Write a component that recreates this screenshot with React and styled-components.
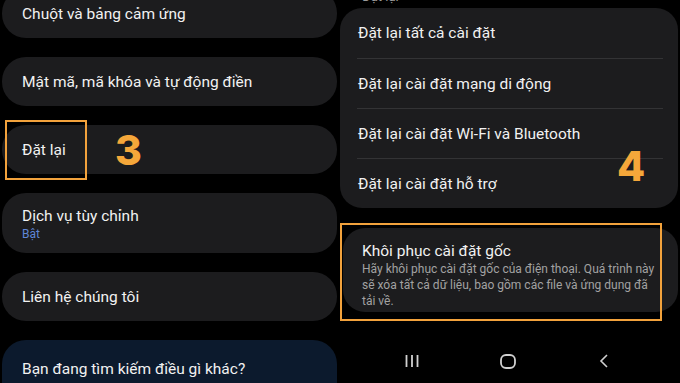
import React from 'react';
import styled, { createGlobalStyle } from 'styled-components'

const Global = createGlobalStyle`
  body {
    margin: 0;
    background: #000;
    font-family: Roboto, "Noto Sans", sans-serif;
    color: #f1f1f1;
  }
`

const Screen = styled.div`
  display: grid;
  grid-template-columns: 338px 340px;
  column-gap: 2px;
  width: 680px;
  height: 383px;
  overflow: hidden;
  background: #000;
`

const LeftColumn = styled.div`
  display: flex;
  flex-direction: column;
  gap: 19px;
  margin-top: -11px;
  padding-left: 2px;
`

const Card = styled.div`
  position: relative;
  box-sizing: border-box;
  width: 335px;
  min-height: 49px;
  padding: ${p => p.$sub ? '13px 20px 11px' : '0 20px'};
  display: flex;
  flex-direction: column;
  justify-content: center;
  border-radius: 24px;
  background: ${p => p.$blue ? '#0c1a2d' : '#1c1c1e'};
  ${p => p.$blue && 'justify-content: flex-start; padding-top: 19px; height: 70px;'}
`

const Title = styled.div`
  font-size: 15.5px;
  line-height: 20px;
  color: #f1f1f1;
  white-space: nowrap;
`

const Sub = styled.div`
  font-size: 12px;
  line-height: 16px;
  color: #5f86d6;
`

const Highlight = styled.div`
  position: absolute;
  border: 2px solid #f2a23c;
  box-sizing: border-box;
  left: ${p => p.$l}px;
  top: ${p => p.$t}px;
  width: ${p => p.$w}px;
  height: ${p => p.$h}px;
  pointer-events: none;
`

const Step = styled.div`
  position: absolute;
  left: ${p => p.$l}px;
  top: ${p => p.$t}px;
  font-family: Inter, sans-serif;
  font-weight: 800;
  font-size: 41px;
  line-height: 1;
  color: #f5a73a;
`

const RightColumn = styled.div`
  display: flex;
  flex-direction: column;
`

const Crumb = styled.div`
  margin-top: -10px;
  height: 18px;
  padding-left: 22px;
  font-size: 13px;
  line-height: 14px;
  color: #9a9a9a;
`

const Group = styled.div`
  position: relative;
  width: 338px;
  border-radius: 22px;
  background: #1c1c1e;
`

const Row = styled.div`
  height: 50px;
  box-sizing: border-box;
  display: flex;
  align-items: center;
  padding-left: 18px;
  font-size: 15.5px;
  color: #f1f1f1;
  & + & {
    border-top: 1px solid #333335;
    margin: 0 15px 0 17px;
    padding-left: 1px;
  }
`

const FactoryWrap = styled.div`
  position: relative;
  margin-top: 20px;
  padding-left: 3px;
`

const FactoryCard = styled.div`
  width: 335px;
  box-sizing: border-box;
  padding: 13px 20px 3px 19px;
  border-radius: 22px;
  background: #1c1c1e;
`

const Desc = styled.div`
  font-size: 12px;
  line-height: 16px;
  color: #a2a2a2;
  white-space: nowrap;
`

const NavBar = styled.div`
  display: grid;
  grid-template-columns: repeat(3, 96px);
  padding-left: 24px;
  margin-top: 25px;
  height: 48px;
  align-items: center;
  justify-items: center;
`

const NavIcon = ({ type }) => {
  if (type === 'recent') {
    return (
      <svg width="16" height="14" viewBox="0 0 16 14">
        <path d="M2.5 1v12M8 1v12M13.5 1v12" stroke="#d0d0d0" strokeWidth="1.8" />
      </svg>
    )
  }
  if (type === 'home') {
    return (
      <svg width="16" height="15" viewBox="0 0 16 15">
        <rect x="1" y="1" width="14" height="13" rx="5" fill="none" stroke="#d0d0d0" strokeWidth="1.8" />
      </svg>
    )
  }
  return (
    <svg width="10" height="14" viewBox="0 0 10 14">
      <path d="M8 1L2 7l6 6" fill="none" stroke="#d0d0d0" strokeWidth="1.6" />
    </svg>
  )
}

const App = () => {
  return (
    <>
      <Global />
      <Screen>
        <LeftColumn>
          <Card><Title>Chuột và bảng cảm ứng</Title></Card>
          <Card><Title>Mật mã, mã khóa và tự động điền</Title></Card>
          <Card>
            <Title>Đặt lại</Title>
            <Highlight $l={3} $t={-5} $w={82} $h={60} />
            <Step $l={113} $t={5}>3</Step>
          </Card>
          <Card $sub>
            <Title>Dịch vụ tùy chỉnh</Title>
            <Sub>Bật</Sub>
          </Card>
          <Card><Title>Liên hệ chúng tôi</Title></Card>
          <Card $blue><Title>Bạn đang tìm kiếm điều gì khác?</Title></Card>
        </LeftColumn>

        <RightColumn>
          <Crumb>Đặt lại</Crumb>
          <Group>
            <Row>Đặt lại tất cả cài đặt</Row>
            <Row>Đặt lại cài đặt mạng di động</Row>
            <Row>Đặt lại cài đặt Wi-Fi và Bluetooth</Row>
            <Row>Đặt lại cài đặt hỗ trợ</Row>
            <Step $l={277} $t={138}>4</Step>
          </Group>
          <FactoryWrap>
            <FactoryCard>
              <Title>Khôi phục cài đặt gốc</Title>
              <Desc>
                Hãy khôi phục cài đặt gốc của điện thoại. Quá trình này<br />
                sẽ xóa tất cả dữ liệu, bao gồm các file và ứng dụng đã<br />
                tải về.
              </Desc>
            </FactoryCard>
            <Highlight $l={0} $t={-5} $w={322} $h={98} />
          </FactoryWrap>
          <NavBar>
            <NavIcon type="recent" />
            <NavIcon type="home" />
            <NavIcon type="back" />
          </NavBar>
        </RightColumn>
      </Screen>
    </>
  );
};

export default App;
